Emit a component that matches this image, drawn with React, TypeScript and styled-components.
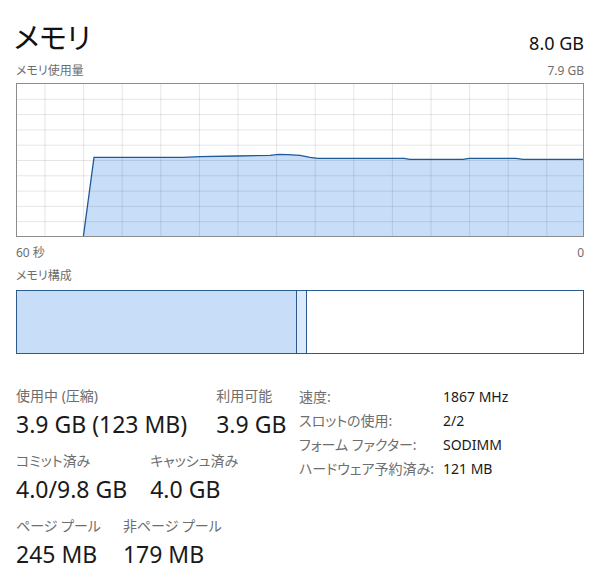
import React from "react";
import styled, { createGlobalStyle } from "styled-components";

const GlobalStyle = createGlobalStyle`
  html, body {
    margin: 0;
    padding: 0;
    background: #ffffff;
  }
  body {
    font-family: "Noto Sans", "Noto Sans CJK JP", sans-serif;
    font-feature-settings: "palt";
    color: #1a1a1a;
  }
`;

const Page = styled.div`
  width: 609px;
  height: 586px;
  box-sizing: border-box;
  padding: 14px 25px 0 16px;
  overflow: hidden;
`;

const Header = styled.div`
  display: flex;
  justify-content: space-between;
  align-items: flex-end;
  height: 42px;
`;

const Title = styled.h1`
  margin: 0 0 0 -2px;
  font-family: "Noto Sans CJK JP", sans-serif;
  font-weight: 400;
  font-size: 29px;
  line-height: 40px;
  color: #111;
`;

const Total = styled.div`
  font-size: 18px;
  line-height: 26px;
  color: #111;
`;

const CaptionRow = styled.div<{ $top?: number }>`
  display: flex;
  justify-content: space-between;
  margin-top: ${(p) => p.$top ?? 0}px;
  font-size: 12px;
  line-height: 16px;
  color: #6e6e6e;
`;

const GraphFrame = styled.div`
  margin-top: 4px;
  height: 154px;
  box-sizing: border-box;
  border: 1px solid #8c8c8c;
  svg {
    display: block;
  }
`;

const CompBar = styled.div`
  margin-top: 6px;
  height: 64px;
  box-sizing: border-box;
  border: 1px solid #2c5a8c;
  display: flex;
`;

const Segment = styled.div<{ $w?: number; $fill: string; $last?: boolean }>`
  flex: ${(p) => (p.$w ? `0 0 ${p.$w}px` : "1 1 auto")};
  background: ${(p) => p.$fill};
  border-right: ${(p) => (p.$last ? "none" : "1px solid #2c5a8c")};
`;

const Stats = styled.div`
  margin-top: 32px;
  display: flex;
`;

const StatsLeft = styled.div`
  width: 283px;
  display: flex;
  flex-direction: column;
  gap: 12px;
`;

const StatRow = styled.div<{ $gap: number }>`
  display: flex;
  gap: ${(p) => p.$gap}px;
`;

const Stat = styled.div`
  display: flex;
  flex-direction: column;
  gap: 3px;
`;

const StatLabel = styled.div`
  font-size: 14px;
  line-height: 20px;
  color: #6e6e6e;
  white-space: nowrap;
`;

const StatValue = styled.div`
  font-size: 23px;
  line-height: 30px;
  color: #1a1a1a;
  white-space: nowrap;
`;

const InfoTable = styled.div`
  display: grid;
  grid-template-columns: 144px auto;
  grid-auto-rows: 24px;
  align-content: start;
  margin-top: -1px;
  font-size: 14px;
  line-height: 24px;
`;

const InfoKey = styled.div`
  color: #6e6e6e;
  white-space: nowrap;
`;

const InfoVal = styled.div`
  color: #1a1a1a;
  white-space: nowrap;
`;

// graph inner area: 566 x 152
const W = 566;
const H = 152;
const points: [number, number][] = [
  [83.3, 238],
  [94, 158.3],
  [183, 158.3],
  [200, 157.6],
  [237, 157],
  [270, 156.3],
  [279, 155.4],
  [288, 155.6],
  [300, 156.3],
  [310, 158.4],
  [318, 159.3],
  [404, 159.3],
  [410, 160.3],
  [463, 160.3],
  [469, 159.3],
  [516, 159.3],
  [523, 160.3],
  [584, 160.3],
].map(([x, y]) => [x - 17, y - 85]);

const UsageGraph: React.FC = () => {
  const line = points.map(([x, y]) => `${x},${y}`).join(" ");
  const area = `${line} ${W},${H} ${points[0][0]},${H}`;
  const vLines = Array.from({ length: 14 }, (_, i) => 28 + i * 38.6);
  const hLines = Array.from({ length: 9 }, (_, i) => 15.3 * (i + 1));
  return (
    <svg width={W} height={H} viewBox={`0 0 ${W} ${H}`}>
      <polygon points={area} fill="#c8def8" />
      {vLines.map((x) => (
        <line key={`v${x}`} x1={x} y1={0} x2={x} y2={H} stroke="rgba(0,0,0,0.1)" strokeWidth={1} />
      ))}
      {hLines.map((y) => (
        <line key={`h${y}`} x1={0} y1={y} x2={W} y2={y} stroke="rgba(0,0,0,0.1)" strokeWidth={1} />
      ))}
      <polyline points={line} fill="none" stroke="#1f5a96" strokeWidth={1.3} />
    </svg>
  );
};

export default function App() {
  return (
    <>
      <GlobalStyle />
      <Page>
        <Header>
          <Title>メモリ</Title>
          <Total>8.0 GB</Total>
        </Header>

        <CaptionRow $top={7}>
          <span>メモリ使用量</span>
          <span>7.9 GB</span>
        </CaptionRow>
        <GraphFrame>
          <UsageGraph />
        </GraphFrame>
        <CaptionRow $top={8}>
          <span>60 秒</span>
          <span>0</span>
        </CaptionRow>

        <CaptionRow $top={7}>
          <span>メモリ構成</span>
        </CaptionRow>
        <CompBar>
          <Segment $w={279} $fill="#c8def8" />
          <Segment $w={9} $fill="#dcebfb" />
          <Segment $fill="#ffffff" $last />
        </CompBar>

        <Stats>
          <StatsLeft>
            <StatRow $gap={29}>
              <Stat>
                <StatLabel>使用中 (圧縮)</StatLabel>
                <StatValue>3.9 GB (123 MB)</StatValue>
              </Stat>
              <Stat>
                <StatLabel>利用可能</StatLabel>
                <StatValue>3.9 GB</StatValue>
              </Stat>
            </StatRow>
            <StatRow $gap={23}>
              <Stat>
                <StatLabel>コミット済み</StatLabel>
                <StatValue>4.0/9.8 GB</StatValue>
              </Stat>
              <Stat>
                <StatLabel>キャッシュ済み</StatLabel>
                <StatValue>4.0 GB</StatValue>
              </Stat>
            </StatRow>
            <StatRow $gap={22}>
              <Stat>
                <StatLabel>ページ プール</StatLabel>
                <StatValue>245 MB</StatValue>
              </Stat>
              <Stat>
                <StatLabel>非ページ プール</StatLabel>
                <StatValue>179 MB</StatValue>
              </Stat>
            </StatRow>
          </StatsLeft>

          <InfoTable>
            <InfoKey>速度:</InfoKey>
            <InfoVal>1867 MHz</InfoVal>
            <InfoKey>スロットの使用:</InfoKey>
            <InfoVal>2/2</InfoVal>
            <InfoKey>フォーム ファクター:</InfoKey>
            <InfoVal>SODIMM</InfoVal>
            <InfoKey>ハードウェア予約済み:</InfoKey>
            <InfoVal>121 MB</InfoVal>
          </InfoTable>
        </Stats>
      </Page>
    </>
  );
}
